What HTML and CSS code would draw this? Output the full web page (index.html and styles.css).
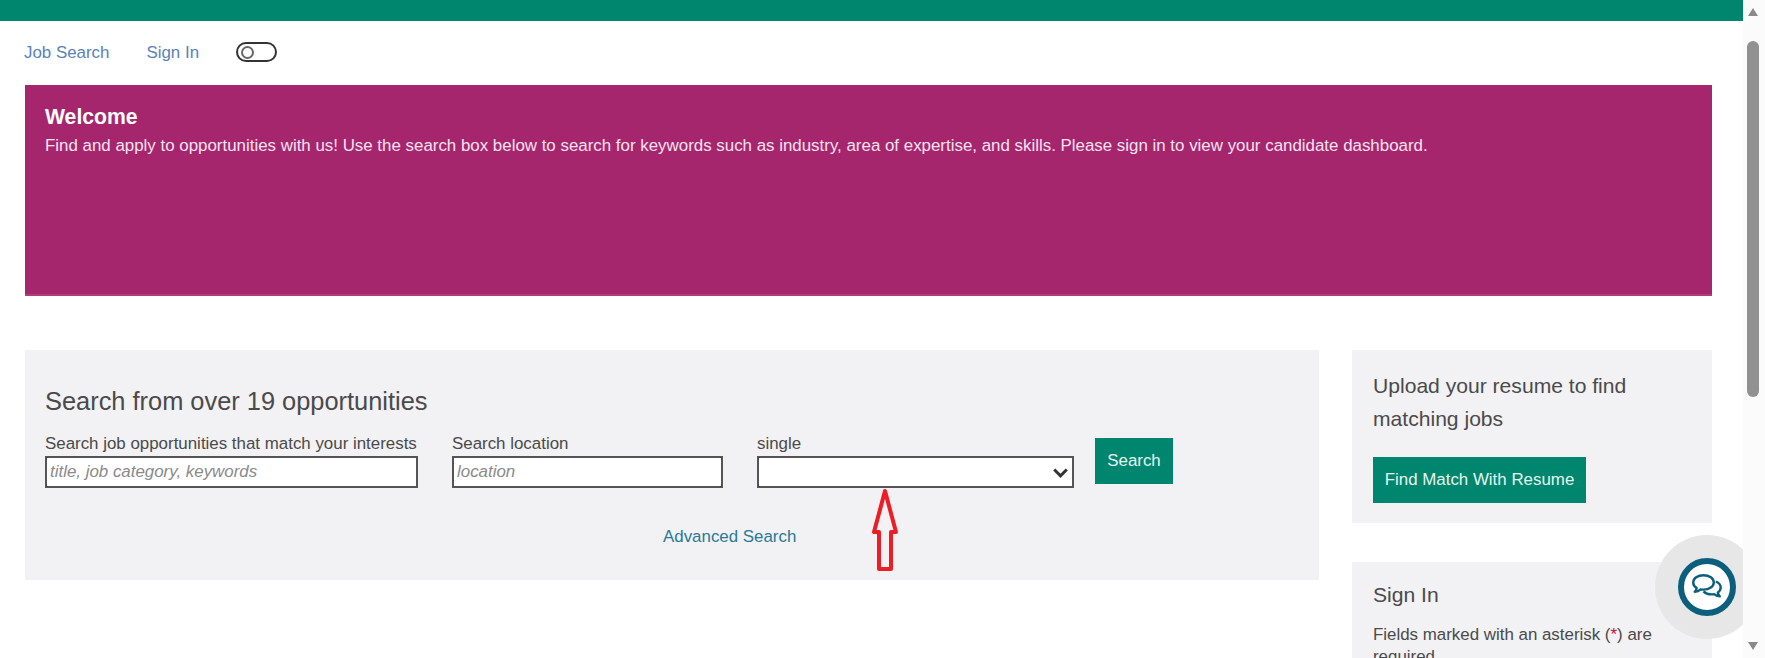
FILE: index.html
```html
<!DOCTYPE html>
<html lang="en">
<head>
    <meta charset="UTF-8">
    <title>Job Search</title>
    <link rel="stylesheet" href="styles.css">
</head>
<body>
    <div class="page">
        <div class="top-bar"></div>
        <nav class="main-nav">
            <a href="#">Job Search</a>
            <a href="#">Sign In</a>
            <span class="toggle"><span class="toggle-knob"></span></span>
        </nav>
        <section class="banner">
            <h1>Welcome</h1>
            <p>Find and apply to opportunities with us! Use the search box below to search for keywords such as industry, area of expertise, and skills. Please sign in to view your candidate dashboard.</p>
        </section>
        <div class="content">
            <section class="panel search-panel">
                <h2>Search from over 19 opportunities</h2>
                <form class="search-form">
                    <div class="field field-keywords">
                        <label for="keywords">Search job opportunities that match your interests</label>
                        <input type="text" id="keywords" placeholder="title, job category, keywords">
                    </div>
                    <div class="field field-location">
                        <label for="location">Search location</label>
                        <input type="text" id="location" placeholder="location">
                    </div>
                    <div class="field field-single">
                        <label for="single">single</label>
                        <div class="select-wrap">
                            <select id="single"><option></option></select>
                            <svg class="select-chevron" width="15" height="10" viewBox="0 0 15 10" fill="none" stroke="#333" stroke-width="3">
                                <path d="M1.200 1.500 L7.500 7.800 L13.800 1.500"/>
                            </svg>
                        </div>
                    </div>
                    <button type="button" class="btn btn-search">Search</button>
                </form>
                <a href="#" class="advanced-link">Advanced Search</a>
            </section>
            <aside class="sidebar">
                <section class="panel resume-panel">
                    <h3>Upload your resume to find matching jobs</h3>
                    <button type="button" class="btn btn-resume">Find Match With Resume</button>
                </section>
                <section class="panel signin-panel">
                    <h3>Sign In</h3>
                    <p>Fields marked with an asterisk (<span class="required">*</span>) are required.</p>
                </section>
            </aside>
        </div>
        <div class="chat-halo">
            <div class="chat-button">
                <svg width="32" height="28" viewBox="0 0 32 28" fill="none" stroke="#0b5f7d" stroke-width="2.4" stroke-linejoin="round">
                    <path d="M12.500 2.200c-5.800 0-10.300 3.200-10.300 7.300 0 2.300 1.300 4.200 3.500 5.500-.2 1.400-.9 2.800-2 3.800 2.300-.2 4.500-1.100 6-2.500 .9 .2 1.800 .3 2.800 .3 5.800 0 10.300-3.100 10.300-7.100s-4.500-7.300-10.300-7.300z"/>
                    <path d="M24.800 8.500c2.900 1.200 4.900 3.500 4.900 6.100 0 2-1.100 3.700-2.900 4.900 .2 1.500 .9 2.800 2 3.900-2.200-.2-4.200-1-5.700-2.300-.9 .2-1.700 .3-2.700 .3-3.300 0-6.200-1.200-7.900-3"/>
                </svg>
            </div>
        </div>
        <svg class="red-arrow" width="30" height="86" viewBox="0 0 30 86">
            <path d="M15 3 L4 44 H9 V81 H21 V44 H26 Z" fill="none" stroke="#ee1c25" stroke-width="4" stroke-linejoin="round"/>
        </svg>
    </div>
    <div class="scrollbar">
        <span class="arrow-up"></span>
        <span class="thumb"></span>
        <span class="arrow-down"></span>
    </div>
</body>
</html>
```

FILE: styles.css
```css
body {
    margin: 0;
    display: flex;
    height: 658px;
    overflow: hidden;
    background-color: #fff;
    font-family: "Liberation Sans", Arial, sans-serif;
    font-size: 16.9px;
    color: #4a4a4a;
}
.page {
    position: relative;
    flex: 1;
    min-width: 0;
    overflow: hidden;
}
.top-bar {
    height: 21px;
    background-color: #00856f;
}
.main-nav {
    height: 64px;
    box-sizing: border-box;
    padding: 0 0 0 24px;
    display: flex;
    align-items: center;
    gap: 37px;
}
.main-nav a {
    color: #5b82b8;
    text-decoration: none;
}
.toggle {
    width: 41px;
    height: 20px;
    box-sizing: border-box;
    border: 2px solid #333;
    border-radius: 10px;
    display: flex;
    align-items: center;
    padding-left: 3px;
    margin-bottom: 2px;
}
.toggle-knob {
    width: 13px;
    height: 13px;
    box-sizing: border-box;
    border: 2px solid #666;
    border-radius: 50%;
}
.banner {
    margin: 0 31px 0 25px;
    height: 211px;
    box-sizing: border-box;
    padding: 20px 20px;
    background-color: #a6266e;
    border-bottom: 2px solid #b43a80;
    color: #f6e2ee;
}
.banner h1 {
    margin: 0;
    font-size: 21.2px;
    line-height: 24px;
    color: #fff;
}
.banner p {
    margin: 6px 0 0;
    font-size: 16.9px;
    line-height: 22px;
}
.content {
    margin: 54px 31px 0 25px;
    display: grid;
    grid-template-columns: 1294px 360px;
    gap: 33px;
    align-items: start;
}
.panel {
    background-color: #f2f1f3;
}
.search-panel {
    height: 230px;
    box-sizing: border-box;
    padding: 37px 20px 0;
}
.search-panel h2 {
    margin: 0;
    font-size: 25.4px;
    font-weight: normal;
    line-height: 28px;
}
.search-form {
    margin-top: 19px;
    display: flex;
    align-items: flex-start;
}
.field {
    display: flex;
    flex-direction: column;
    margin-right: 34px;
}
.field label {
    line-height: 20px;
    margin-bottom: 2px;
    white-space: nowrap;
}
.field input, .field select {
    height: 32px;
    width: 100%;
    box-sizing: border-box;
    border: 2px solid #555;
    background-color: #fff;
    border-radius: 0;
    padding: 0 3px;
    font-family: inherit;
    font-size: 16.9px;
    margin: 0;
}
.field input::placeholder {
    color: #8a8a8a;
    font-style: italic;
}
.field select {
    appearance: none;
    display: block;
}
.select-wrap {
    position: relative;
}
.select-chevron {
    position: absolute;
    right: 6px;
    top: 12px;
}
.field-keywords {
    width: 373px;
}
.field-location {
    width: 271px;
}
.field-single {
    width: 317px;
    margin-right: 21px;
}
.btn {
    border: none;
    border-radius: 0;
    background-color: #00856f;
    color: #e6f5ee;
    font-family: inherit;
    font-size: 16.9px;
    height: 46px;
    padding: 0;
}
.btn-search {
    width: 78px;
    margin-top: 4px;
}
.advanced-link {
    display: block;
    margin: 39px 0 0 618px;
    color: #2b7a98;
    text-decoration: none;
    line-height: 20px;
}
.sidebar {
    display: flex;
    flex-direction: column;
    gap: 39px;
}
.resume-panel {
    height: 173px;
    box-sizing: border-box;
    padding: 19px 21px 0;
}
.sidebar h3 {
    margin: 0;
    font-size: 21.1px;
    font-weight: normal;
    line-height: 33px;
}
.btn-resume {
    display: block;
    margin-top: 22px;
    width: 213px;
}
.signin-panel {
    height: 200px;
    box-sizing: border-box;
    padding: 16px 21px 0;
}
.signin-panel p {
    margin: 13px 0 0;
    line-height: 22px;
}
.required {
    color: #c8102e;
}
.chat-halo {
    position: absolute;
    left: 1655px;
    top: 535px;
    width: 104px;
    height: 104px;
    border-radius: 50%;
    background-color: #e8e7e7;
    display: flex;
    align-items: center;
    justify-content: center;
}
.chat-button {
    width: 58px;
    height: 58px;
    box-sizing: border-box;
    border: 6px solid #0b5f7d;
    border-radius: 50%;
    background-color: #fff;
    display: flex;
    align-items: center;
    justify-content: center;
}
.red-arrow {
    position: absolute;
    left: 870px;
    top: 488px;
}
.scrollbar {
    width: 22px;
    flex: none;
    position: relative;
    background-color: #fbfbfb;
}
.thumb {
    position: absolute;
    left: 4px;
    top: 41px;
    width: 12px;
    height: 356px;
    border-radius: 6px;
    background-color: #919191;
}
.arrow-up, .arrow-down {
    position: absolute;
    left: 5px;
    width: 0;
    height: 0;
    border-left: 5px solid transparent;
    border-right: 5px solid transparent;
}
.arrow-up {
    top: 8px;
    border-bottom: 8px solid #8a8a8a;
}
.arrow-down {
    top: 642px;
    border-top: 8px solid #8a8a8a;
}
```
